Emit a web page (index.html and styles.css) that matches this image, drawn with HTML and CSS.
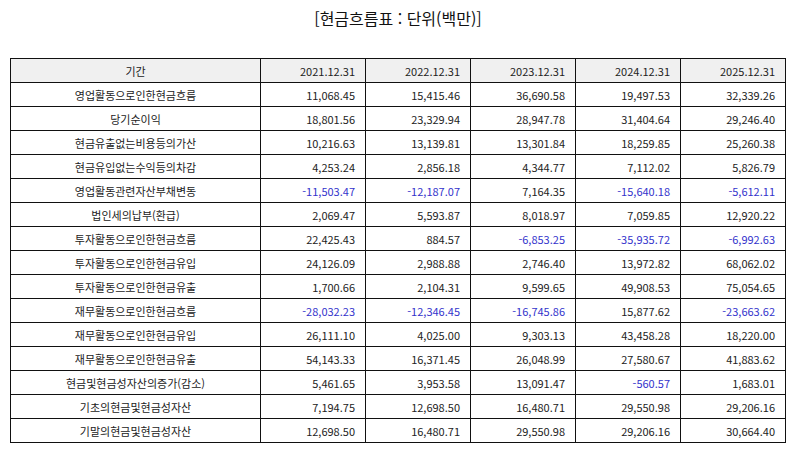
FILE: index.html
```html
<!DOCTYPE html>
<html lang="ko">
<head>
<meta charset="utf-8">
<link rel="stylesheet" href="styles.css">
</head>
<body>
<div class="page">
  <h1 class="title">[현금흐름표 : 단위(백만)]</h1>
  <table class="cf">
    <colgroup>
      <col class="c-label"><col class="c-val"><col class="c-val"><col class="c-val"><col class="c-val"><col class="c-val">
    </colgroup>
    <thead>
      <tr><th class="lbl">기간</th><th>2021.12.31</th><th>2022.12.31</th><th>2023.12.31</th><th>2024.12.31</th><th>2025.12.31</th></tr>
    </thead>
    <tbody>
      <tr><td class="lbl">영업활동으로인한현금흐름</td><td>11,068.45</td><td>15,415.46</td><td>36,690.58</td><td>19,497.53</td><td>32,339.26</td></tr>
      <tr><td class="lbl">당기순이익</td><td>18,801.56</td><td>23,329.94</td><td>28,947.78</td><td>31,404.64</td><td>29,246.40</td></tr>
      <tr><td class="lbl">현금유출없는비용등의가산</td><td>10,216.63</td><td>13,139.81</td><td>13,301.84</td><td>18,259.85</td><td>25,260.38</td></tr>
      <tr><td class="lbl">현금유입없는수익등의차감</td><td>4,253.24</td><td>2,856.18</td><td>4,344.77</td><td>7,112.02</td><td>5,826.79</td></tr>
      <tr><td class="lbl">영업활동관련자산부채변동</td><td class="neg">-11,503.47</td><td class="neg">-12,187.07</td><td>7,164.35</td><td class="neg">-15,640.18</td><td class="neg">-5,612.11</td></tr>
      <tr><td class="lbl">법인세의납부(환급)</td><td>2,069.47</td><td>5,593.87</td><td>8,018.97</td><td>7,059.85</td><td>12,920.22</td></tr>
      <tr><td class="lbl">투자활동으로인한현금흐름</td><td>22,425.43</td><td>884.57</td><td class="neg">-6,853.25</td><td class="neg">-35,935.72</td><td class="neg">-6,992.63</td></tr>
      <tr><td class="lbl">투자활동으로인한현금유입</td><td>24,126.09</td><td>2,988.88</td><td>2,746.40</td><td>13,972.82</td><td>68,062.02</td></tr>
      <tr><td class="lbl">투자활동으로인한현금유출</td><td>1,700.66</td><td>2,104.31</td><td>9,599.65</td><td>49,908.53</td><td>75,054.65</td></tr>
      <tr><td class="lbl">재무활동으로인한현금흐름</td><td class="neg">-28,032.23</td><td class="neg">-12,346.45</td><td class="neg">-16,745.86</td><td>15,877.62</td><td class="neg">-23,663.62</td></tr>
      <tr><td class="lbl">재무활동으로인한현금유입</td><td>26,111.10</td><td>4,025.00</td><td>9,303.13</td><td>43,458.28</td><td>18,220.00</td></tr>
      <tr><td class="lbl">재무활동으로인한현금유출</td><td>54,143.33</td><td>16,371.45</td><td>26,048.99</td><td>27,580.67</td><td>41,883.62</td></tr>
      <tr><td class="lbl">현금및현금성자산의증가(감소)</td><td>5,461.65</td><td>3,953.58</td><td>13,091.47</td><td class="neg">-560.57</td><td>1,683.01</td></tr>
      <tr><td class="lbl">기초의현금및현금성자산</td><td>7,194.75</td><td>12,698.50</td><td>16,480.71</td><td>29,550.98</td><td>29,206.16</td></tr>
      <tr><td class="lbl">기말의현금및현금성자산</td><td>12,698.50</td><td>16,480.71</td><td>29,550.98</td><td>29,206.16</td><td>30,664.40</td></tr>
    </tbody>
  </table>
</div>
</body>
</html>
```

FILE: styles.css
```css
html, body {
  margin: 0;
  padding: 0;
  background: #ffffff;
}
body {
  font-family: "Noto Sans CJK KR", "Noto Sans", sans-serif;
  color: #222222;
}
.page {
  padding: 6px 0 0 10px;
}
.title {
  margin: 0;
  width: 776px;
  text-align: center;
  font-size: 16px;
  font-weight: 400;
  line-height: 24px;
  color: #111111;
}
.cf {
  margin-top: 28px;
  border-collapse: collapse;
  table-layout: fixed;
  width: 776px;
  font-size: 11px;
}
.c-label { width: 250px; }
.c-val { width: 105px; }
.cf th, .cf td {
  border: 1px solid #111111;
  height: 24px;
  padding: 0 10px 0 4px;
  box-sizing: border-box;
  text-align: right;
  font-weight: 400;
  line-height: 16px;
  white-space: nowrap;
}
.cf thead th {
  background: #f0f0f0;
}
.cf .lbl {
  text-align: center;
  padding: 0 4px;
}
.cf .neg {
  color: #3333cc;
}
```
